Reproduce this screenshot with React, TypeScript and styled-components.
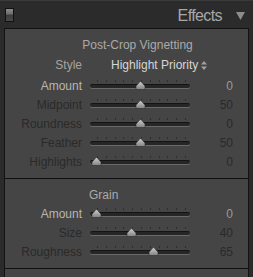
import React from "react";
import styled, { createGlobalStyle } from "styled-components";

const GlobalStyle = createGlobalStyle`
  html, body {
    margin: 0;
    padding: 0;
    background: #2b2b2b;
    font-family: "Liberation Sans", Arial, sans-serif;
  }
`;

const Page = styled.div`
  width: 253px;
  height: 277px;
  overflow: hidden;
  background: #2b2b2b;
`;

const Header = styled.div`
  height: 27px;
  border-top: 1px solid #3a3a3a;
  display: flex;
  align-items: center;
  padding: 0 8px 0 5px;
`;

const Toggle = styled.div`
  width: 7px;
  height: 12px;
  border: 1px solid #111;
  background: linear-gradient(#8a8a8a 0, #6e6e6e 5px, #3c3c3c 6px, #4a4a4a 100%);
  margin-top: 1px;
`;

const Title = styled.div`
  margin-left: auto;
  font-size: 16px;
  letter-spacing: -0.6px;
  color: #a8a8a8;
  margin-top: 2px;
`;

const Arrow = styled.svg`
  margin-left: 14px;
  margin-top: 2px;
`;

const Panel = styled.div`
  margin: 0 4px;
  border: 1px solid #121212;
  border-bottom: none;
  background: #454545;
`;

const Section = styled.div<{ $last?: boolean }>`
  padding: 8px 0 7px;
  border-bottom: 1px solid #101010;
  height: ${(p) => (p.$last ? "20px" : "auto")};
`;

const SectionTitle = styled.div<{ $left?: number }>`
  height: 16px;
  line-height: 16px;
  font-size: 12px;
  color: #aaaaaa;
  padding-left: ${(p) => p.$left ?? 0}px;
  text-align: ${(p) => (p.$left ? "left" : "center")};
  margin-left: ${(p) => (p.$left ? 0 : 22)}px;
`;

const StyleRow = styled.div`
  display: flex;
  align-items: center;
  height: 16px;
  margin-top: 4px;
  margin-bottom: 3px;
  font-size: 12px;
`;

const Label = styled.div<{ $active?: boolean }>`
  width: 77px;
  text-align: right;
  font-size: 12px;
  color: ${(p) => (p.$active ? "#b6b6b6" : "#2a2a2a")};
  flex-shrink: 0;
`;

const StyleValue = styled.div`
  margin-left: 29px;
  color: #d6d6d6;
  display: flex;
  align-items: center;
  gap: 3px;
`;

const Rows = styled.div<{ $top?: number }>`
  margin-top: ${(p) => p.$top ?? 0}px;
`;

const Row = styled.div`
  display: flex;
  align-items: center;
  height: 19px;
`;

const Slider = styled.div`
  position: relative;
  width: 100px;
  height: 19px;
  margin-left: 8px;
  flex-shrink: 0;
`;

const Ticks = styled.div`
  position: absolute;
  left: 7px;
  top: 4px;
  width: 89px;
  height: 2px;
  background: repeating-linear-gradient(
    to right,
    #2e2e2e 0,
    #2e2e2e 1px,
    transparent 1px,
    transparent 8.8px
  );
`;

const Track = styled.div`
  position: absolute;
  left: 0;
  right: 0;
  top: 8px;
  height: 3px;
  border-radius: 2px;
  background: #262626;
  border-top: 1px solid #141414;
  box-shadow: 0 1px 0 #6a6a6a;
`;

const Thumb = styled.svg`
  position: absolute;
  top: 5px;
`;

const Value = styled.div<{ $active?: boolean }>`
  width: 43px;
  text-align: right;
  font-size: 12px;
  color: ${(p) => (p.$active ? "#9a9a9a" : "#2a2a2a")};
`;

type SliderRow = {
  label: string;
  value: number;
  min: number;
  max: number;
  active?: boolean;
};

const vignette: SliderRow[] = [
  { label: "Amount", value: 0, min: -100, max: 100, active: true },
  { label: "Midpoint", value: 50, min: 0, max: 100 },
  { label: "Roundness", value: 0, min: -100, max: 100 },
  { label: "Feather", value: 50, min: 0, max: 100 },
  { label: "Highlights", value: 0, min: 0, max: 100 },
];

const grain: SliderRow[] = [
  { label: "Amount", value: 0, min: 0, max: 100, active: true },
  { label: "Size", value: 40, min: 0, max: 100 },
  { label: "Roughness", value: 65, min: 0, max: 100 },
];

function SliderLine({ item }: { item: SliderRow }) {
  const pos = 6 + ((item.value - item.min) / (item.max - item.min)) * 89;
  return (
    <Row>
      <Label $active={item.active}>{item.label}</Label>
      <Slider>
        <Ticks />
        <Track />
        <Thumb
          width="11"
          height="9"
          viewBox="0 0 11 9"
          style={{ left: pos - 5.5 }}
        >
          <defs>
            <linearGradient id="thumbGrad" x1="0" y1="0" x2="0" y2="1">
              <stop offset="0" stopColor="#d0d0d0" />
              <stop offset="1" stopColor="#808080" />
            </linearGradient>
          </defs>
          <path
            d="M1 8.5 L1 5.5 Q1 4.5 2 4 L4.8 0.8 Q5.5 0 6.2 0.8 L9 4 Q10 4.5 10 5.5 L10 8.5 Z"
            fill="url(#thumbGrad)"
            stroke="#2a2a2a"
            strokeWidth="0.6"
          />
        </Thumb>
      </Slider>
      <Value $active={item.active}>{item.value}</Value>
    </Row>
  );
}

export default function App() {
  return (
    <Page>
      <GlobalStyle />
      <Header>
        <Toggle />
        <Title>Effects</Title>
        <Arrow width="9" height="8" viewBox="0 0 9 8">
          <path d="M0 0 L9 0 L4.5 8 Z" fill="#8c8c8c" />
        </Arrow>
      </Header>
      <Panel>
        <Section>
          <SectionTitle>Post-Crop Vignetting</SectionTitle>
          <StyleRow>
            <Label $active style={{ color: "#a4a4a4" }}>
              Style
            </Label>
            <StyleValue>
              Highlight Priority
              <svg width="6" height="9" viewBox="0 0 6 9">
                <path d="M0 3.5 L3 0 L6 3.5 Z M0 5.5 L3 9 L6 5.5 Z" fill="#a0a0a0" />
              </svg>
            </StyleValue>
          </StyleRow>
          <Rows>
            {vignette.map((item) => (
              <SliderLine key={item.label} item={item} />
            ))}
          </Rows>
        </Section>
        <Section>
          <SectionTitle $left={84}>Grain</SectionTitle>
          <Rows $top={1}>
            {grain.map((item) => (
              <SliderLine key={item.label} item={item} />
            ))}
          </Rows>
        </Section>
        <Section $last />
      </Panel>
    </Page>
  );
}
